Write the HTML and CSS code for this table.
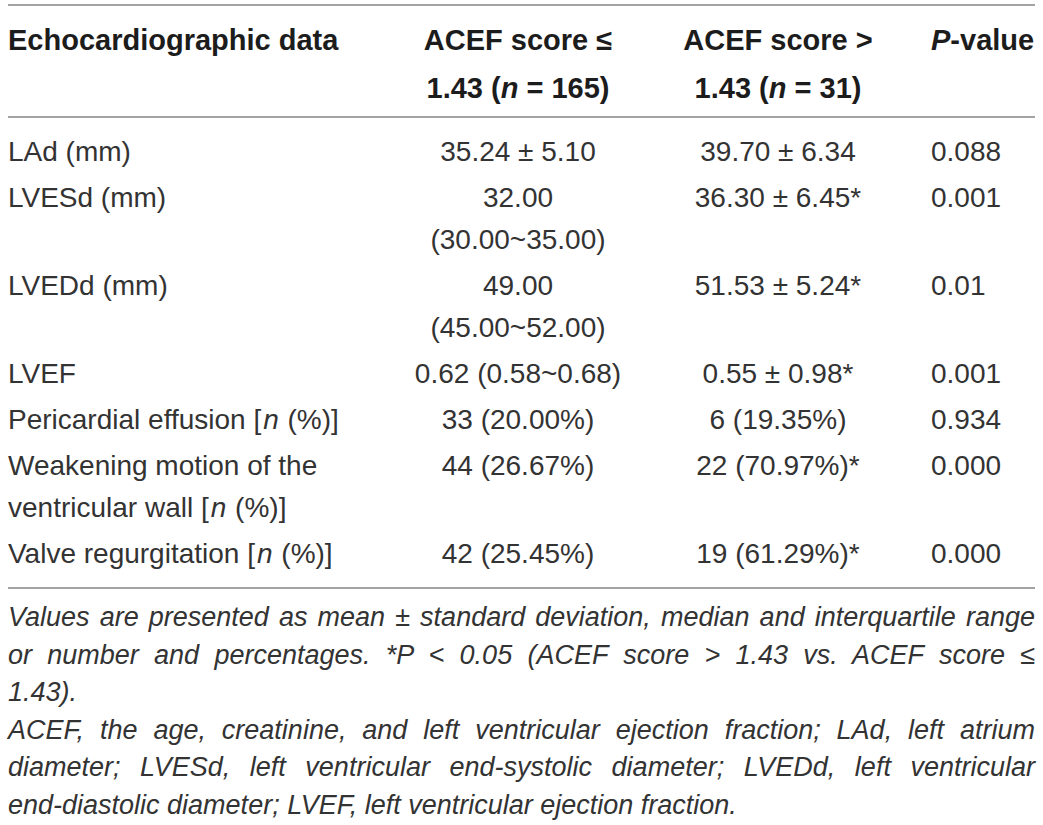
FILE: index.html
```html
<!DOCTYPE html>
<html lang="en">
<head>
<meta charset="utf-8">
<title>Echocardiographic data by ACEF score</title>
<link rel="stylesheet" href="styles.css">
</head>
<body>
<div class="page">
  <table class="data">
    <colgroup>
      <col class="c1"><col class="c2"><col class="c3"><col class="c4">
    </colgroup>
    <thead>
      <tr>
        <th class="left">Echocardiographic data</th>
        <th class="mid">ACEF score ≤<br>1.43 (<i>n</i> = 165)</th>
        <th class="mid">ACEF score &gt;<br>1.43 (<i>n</i> = 31)</th>
        <th class="pv"><i>P</i>-value</th>
      </tr>
    </thead>
    <tbody>
      <tr class="first">
        <td class="left">LAd (mm)</td>
        <td class="mid">35.24 ± 5.10</td>
        <td class="mid">39.70 ± 6.34</td>
        <td class="pv">0.088</td>
      </tr>
      <tr>
        <td class="left">LVESd (mm)</td>
        <td class="mid">32.00<br>(30.00~35.00)</td>
        <td class="mid">36.30 ± 6.45*</td>
        <td class="pv">0.001</td>
      </tr>
      <tr>
        <td class="left">LVEDd (mm)</td>
        <td class="mid">49.00<br>(45.00~52.00)</td>
        <td class="mid">51.53 ± 5.24*</td>
        <td class="pv">0.01</td>
      </tr>
      <tr>
        <td class="left">LVEF</td>
        <td class="mid">0.62 (0.58~0.68)</td>
        <td class="mid">0.55 ± 0.98*</td>
        <td class="pv">0.001</td>
      </tr>
      <tr>
        <td class="left">Pericardial effusion [<i>n</i> (%)]</td>
        <td class="mid">33 (20.00%)</td>
        <td class="mid">6 (19.35%)</td>
        <td class="pv">0.934</td>
      </tr>
      <tr>
        <td class="left">Weakening motion of the<br>ventricular wall [<i>n</i> (%)]</td>
        <td class="mid">44 (26.67%)</td>
        <td class="mid">22 (70.97%)*</td>
        <td class="pv">0.000</td>
      </tr>
      <tr class="last">
        <td class="left">Valve regurgitation [<i>n</i> (%)]</td>
        <td class="mid">42 (25.45%)</td>
        <td class="mid">19 (61.29%)*</td>
        <td class="pv">0.000</td>
      </tr>
    </tbody>
  </table>
  <div class="notes">
    <p><span class="jl">Values are presented as mean ± standard deviation, median and interquartile range</span>
      <span class="jl">or number and percentages. *P &lt; 0.05 (ACEF score &gt; 1.43 vs. ACEF score ≤</span>
      <span class="ll">1.43).</span></p>
    <p><span class="jl">ACEF, the age, creatinine, and left ventricular ejection fraction; LAd, left atrium</span>
      <span class="jl">diameter; LVESd, left ventricular end-systolic diameter; LVEDd, left ventricular</span>
      <span class="ll">end-diastolic diameter; LVEF, left ventricular ejection fraction.</span></p>
  </div>
</div>
</body>
</html>
```

FILE: styles.css
```css
html, body {
  margin: 0;
  padding: 0;
  background: #ffffff;
}

.page {
  padding: 4px 8px 0 8px;
  font-family: "Liberation Sans", Arial, sans-serif;
  color: #333333;
}

.data {
  width: 1027px;
  border-collapse: collapse;
  table-layout: fixed;
}

.c1 { width: 392px; }
.c2 { width: 236px; }
.c3 { width: 284px; }
.c4 { width: 115px; }

.data th {
  font-size: 29px;
  font-weight: bold;
  line-height: 48px;
  color: #1c1c1c;
  vertical-align: top;
  padding: 10px 0 4px 0;
  border-top: 2px solid #a3a3a3;
  border-bottom: 2px solid #a3a3a3;
}

.data td {
  font-size: 28px;
  line-height: 42px;
  vertical-align: top;
  padding: 2px 0;
}

.data td i {
  margin: 0 1px 0 2px;
}

.data .first td {
  padding-top: 13px;
}

.data .last td {
  padding-bottom: 12px;
  border-bottom: 2px solid #a3a3a3;
}

.left { text-align: left; }
.mid { text-align: center; }
.pv { text-align: left; padding-left: 11px !important; }

.notes {
  font-size: 27px;
  line-height: 37.5px;
  font-style: italic;
  color: #333333;
  padding-top: 10px;
}

.notes p {
  margin: 0;
}

.notes .jl {
  display: block;
  text-align: justify;
  text-align-last: justify;
}

.notes .ll {
  display: block;
  text-align: left;
}
```
